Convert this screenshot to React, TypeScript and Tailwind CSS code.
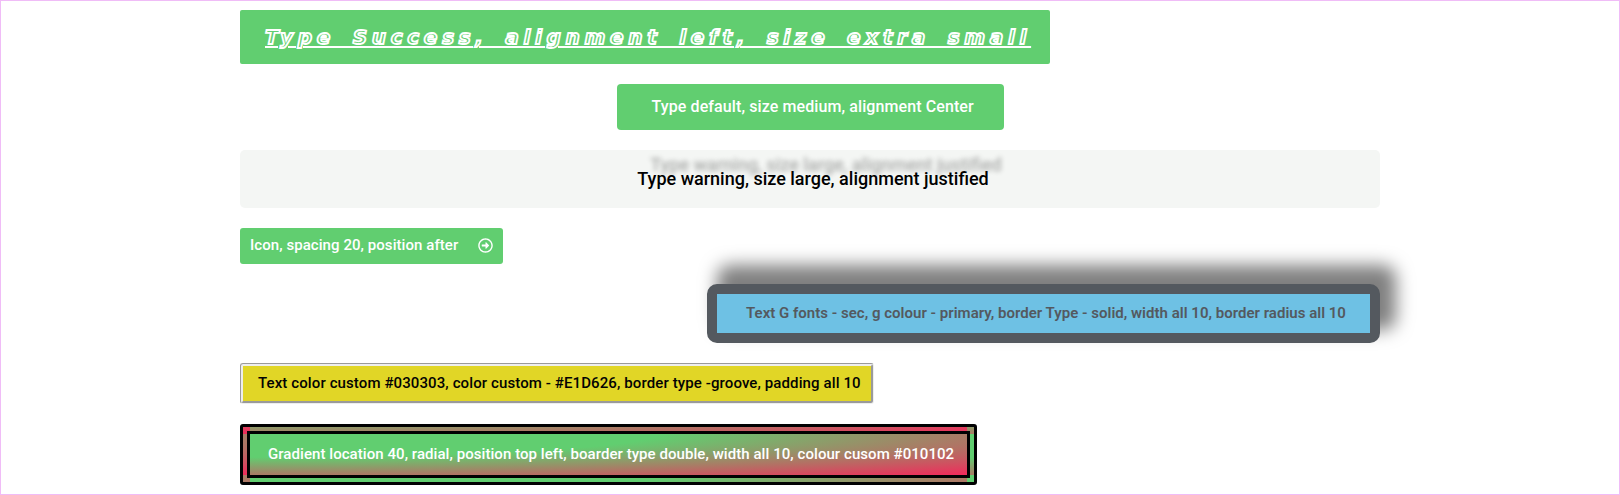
import React from "react";

function ArrowIcon() {
  return (
    <svg viewBox="0 0 512 512" className="h-[15px] w-[15px] fill-current">
      <path d="M504 256C504 119 393 8 256 8S8 119 8 256s111 248 248 248 248-111 248-248zm-448 0c0-110.500 89.500-200 200-200s200 89.500 200 200-89.500 200-200 200S56 366.500 56 256zm72 20v-40c0-6.600 5.400-12 12-12h116v-67c0-10.700 12.900-16 20.500-8.500l99 99c4.700 4.700 4.700 12.300 0 17l-99 99c-7.600 7.600-20.500 2.200-20.500-8.500v-67H140c-6.600 0-12-5.400-12-12z" />
    </svg>
  );
}

export default function App() {
  return (
    <main className="h-[495px] overflow-hidden border border-[#f0bcf7] bg-white font-['Roboto',sans-serif] font-medium text-white">
      <div className="mx-auto flex w-[1140px] flex-col items-start gap-5 pt-[9px] text-[15px] leading-[15px]">
        <a className="flex h-[54px] w-[810px] items-center rounded-[2px] bg-[#61ce70] pl-[25px] font-['DejaVu_Sans',sans-serif] text-[20px] leading-[20px] font-bold whitespace-nowrap">
          <span className="text-[#61ce70] italic underline decoration-white decoration-2 underline-offset-2 tracking-[4.7px] [word-spacing:6px] [-webkit-text-stroke:1.8px_white]">Type Success, alignment left, size extra small</span>
        </a>
        <a className="w-[387px] self-center rounded-[4px] bg-[#61ce70] py-[15px] pl-[35px] text-[16px] leading-[16px] tracking-[0.1px] whitespace-nowrap">Type default, size medium, alignment Center</a>
        <a className="flex h-[58px] w-full items-center justify-center rounded-[5px] bg-[#f4f6f4] pl-[6px] text-[18px] leading-[18px] text-black [text-shadow:13px_-14px_5px_rgba(0,0,0,0.3)]">Type warning, size large, alignment justified</a>
        <a className="flex h-9 w-[263px] items-center justify-between rounded-[3px] bg-[#61ce70] px-[10px] pb-px">
          <span className="tracking-[0.065px]">Icon, spacing 20, position after</span>
          <ArrowIcon />
        </a>
        <a className="flex h-[59px] w-[673px] items-center self-end rounded-[10px] border-[10px] border-[#54595f] bg-[#6ec1e4] pl-[29px] font-semibold tracking-[0.015px] whitespace-nowrap text-[#54595f] shadow-[13px_-16px_17px_3px_rgba(0,0,0,0.5)]">Text G fonts - sec, g colour - primary, border Type - solid, width all 10, border radius all 10</a>
        <a className="flex h-[41px] w-[634px] items-center rounded-[3px] border-[3px] border-[#eeeeee] bg-[#e1d626] pb-px pl-[15px] tracking-[0.108px] whitespace-nowrap text-[#030303] [border-style:groove]">Text color custom #030303, color custom - #E1D626, border type -groove, padding all 10</a>
        <a className="flex h-[61px] w-[737px] items-center rounded-[3px] border-[10px] border-double border-[#010102] bg-[radial-gradient(at_top_left,#61ce70_40%,#f2295b_100%)] pl-[18px] tracking-[0.06px] whitespace-nowrap">Gradient location 40, radial, position top left, boarder type double, width all 10, colour cusom #010102</a>
      </div>
    </main>
  );
}
